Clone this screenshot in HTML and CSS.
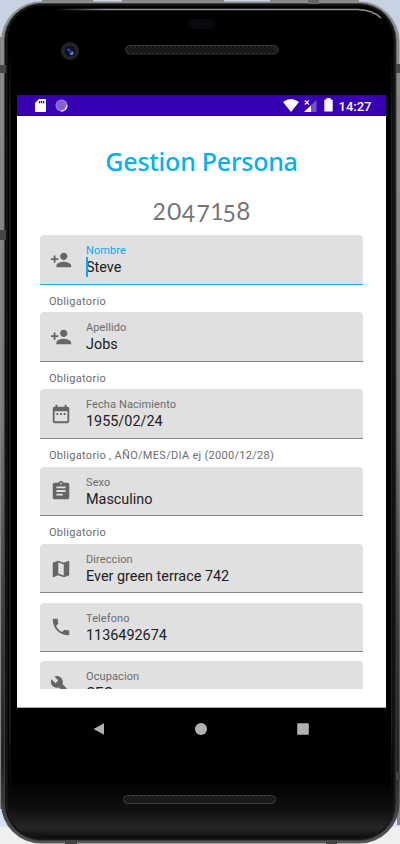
FILE: index.html
```
<!DOCTYPE html>
<html lang="es">
<head>
<meta charset="utf-8">
<title>Gestion Persona</title>
<link rel="stylesheet" href="styles.css">
</head>
<body>
<svg width="0" height="0" class="defs">
  <symbol id="person" viewBox="0 0 24 24"><path d="M15 12c2.200 0 4-1.800 4-4s-1.800-4-4-4-4 1.800-4 4 1.800 4 4 4zM6 10V7H4v3H1v2h3v3h2v-3h3v-2H6zm9 4c-2.700 0-8 1.300-8 4v2h16v-2c0-2.700-5.300-4-8-4z"/></symbol>
  <symbol id="date" viewBox="0 0 24 24"><path d="M9 11H7v2h2zm4 0h-2v2h2zm4 0h-2v2h2zM19 4h-1V2h-2v2H8V2H6v2H5c-1.100 0-2 .9-2 2v14c0 1.100.9 2 2 2h14c1.100 0 2-.9 2-2V6c0-1.100-.9-2-2-2zm0 16H5V9h14z"/></symbol>
  <symbol id="assignment" viewBox="0 0 24 24"><path d="M19 3h-4.180C14.400 1.840 13.300 1 12 1s-2.400.84-2.820 2H5c-1.100 0-2 .9-2 2v14c0 1.100.9 2 2 2h14c1.100 0 2-.9 2-2V5c0-1.100-.9-2-2-2zm-7 0c.55 0 1 .45 1 1s-.45 1-1 1-1-.45-1-1 .45-1 1-1zm2 14H7v-2h7zm3-4H7v-2h10zm0-4H7V7h10z"/></symbol>
  <symbol id="map" viewBox="0 0 24 24"><path d="M20.500 3l-.16.030L15 5.100 9 3 3.360 4.900c-.21.070-.36.250-.36.480V20.500c0 .28.220.5.500.5l.16-.03L9 18.900l6 2.100 5.640-1.900c.21-.07.360-.25.360-.48V3.500c0-.28-.22-.5-.5-.5zM15 19l-6-2.110V5l6 2.110z"/></symbol>
  <symbol id="phone" viewBox="0 0 24 24"><path d="M6.620 10.790c1.440 2.830 3.760 5.140 6.590 6.590l2.200-2.200c.27-.27.670-.36 1.020-.24 1.120.37 2.330.57 3.570.57.550 0 1 .45 1 1V20c0 .55-.45 1-1 1C10.610 21 3 13.390 3 4c0-.55.450-1 1-1h3.500c.55 0 1 .45 1 1 0 1.250.2 2.450.57 3.570.11.350.030.74-.25 1.020z"/></symbol>
  <symbol id="build" viewBox="0 0 24 24"><path d="M22.700 19l-9.100-9.100c.9-2.300.4-5-1.500-6.900-2-2-5-2.400-7.400-1.300L9 6 6 9 1.600 4.700C.4 7.100.9 10.100 2.900 12.100c1.900 1.900 4.600 2.400 6.900 1.500l9.100 9.100c.4.400 1 .4 1.400 0l2.300-2.300c.5-.4.500-1.100.1-1.400z"/></symbol>
</svg>

<svg class="shell" width="400" height="844" viewBox="0 0 400 844">
  <defs>
    <linearGradient id="rim" x2="0" y2="1"><stop offset="0" stop-color="#8f8f8d"/><stop offset=".5" stop-color="#777"/><stop offset=".7" stop-color="#444"/><stop offset=".9" stop-color="#222"/><stop offset="1" stop-color="#555"/></linearGradient>
    <linearGradient id="glass" x2="0" y2="1"><stop offset="0" stop-color="#000"/><stop offset=".93" stop-color="#000"/><stop offset=".965" stop-color="#101010"/><stop offset=".987" stop-color="#262626"/><stop offset="1" stop-color="#0a0a0a"/></linearGradient>
    <linearGradient id="shine"><stop offset="0" stop-color="#899391" stop-opacity="0"/><stop offset=".15" stop-color="#899391"/><stop offset="1" stop-color="#899391"/></linearGradient>
    <linearGradient id="side" x2="0" y2="1"><stop offset="0" stop-color="#222" stop-opacity="0"/><stop offset=".1" stop-color="#222"/><stop offset=".9" stop-color="#222"/><stop offset="1" stop-color="#222" stop-opacity="0"/></linearGradient>
    <pattern id="mesh" width="4" height="4" patternUnits="userSpaceOnUse"><path fill="#171614" d="M0 0h4v4H0z"/><path fill="#2b2823" d="M1 0h1v2H1zM3 2h1v2H3z"/></pattern>
  </defs>
  <path fill="#c7d2e3" d="M0 0h400v130H0z"/><path fill="#d6e2f2" d="M0 700h400v127H0z"/><path fill="#efefef" d="M0 827h400v17H0z"/>
  <path fill="#858585" d="M0 37h3v772H0zM397 65h3v760h-3zM42 0h51v3H42zM122 0h102v3H122zM270 0h89v3h-89z"/>
  <rect x="1" y="1.500" width="398.500" height="842" rx="40" fill="url(#rim)"/>
  <rect x="4.500" y="3.500" width="391.500" height="837" rx="37" fill="#101010" stroke="#3c3c3c"/>
  <rect x="7" y="5" width="387" height="834" rx="35" fill="url(#glass)" stroke="#1c1c1c"/>
  <rect x="9" y="45" width="1.500" height="755" fill="url(#side)"/><rect x="391" y="45" width="1.500" height="755" fill="url(#side)"/>
  <path d="M55 9.500H358Q373 10 381 18" fill="none" stroke="url(#shine)" stroke-width="1.500"/>
  <path d="M0 65h6v8H0zM0 230h6v10H0zM396 64h4v9h-4zM396 772h4v8h-4zM65 840h12v4H65zM326 840h11v4h-11z" fill="#454545"/>
  <path d="M308 0h11v4h-11z" fill="#666"/>
  <rect x="188" y="19" width="27" height="10" rx="5" fill="#08090c"/>
  <circle cx="70" cy="51" r="9" fill="#252422"/><circle cx="70" cy="51" r="5.300" fill="#0c1025"/>
  <circle cx="71.500" cy="53" r="2" fill="#7182d6"/><path d="M67 49l3 0 2 3-2 2z" fill="#233585"/><circle cx="68.500" cy="49.500" r="1" fill="#465bc0"/>
  <rect x="125.500" y="45.500" width="153" height="8.500" rx="4.250" fill="url(#mesh)" stroke="#383735"/>
  <rect x="123.500" y="795.500" width="152" height="8" rx="4" fill="url(#mesh)" stroke="#3c3c38"/>
</svg>

<div class="phone">
  <main class="screen">
    <header class="status">
      <svg width="12" height="14" viewBox="0 0 12 14" class="sd"><path fill="#fff" d="M4 0h6q1 0 1 1v11q0 1-1 1H1q-1 0-1-1V4z"/><path fill="#3700b3" d="M4 2h1.300v2.200H4zM6 2h1.300v2.200H6zM8 2h1.300v2.200H8z"/></svg>
      <svg width="14" height="14" viewBox="0 0 14 14" class="sync"><circle cx="6.500" cy="6.500" r="6" fill="#9a7fd9"/><circle cx="6.200" cy="6.200" r="4.700" fill="#8260d0"/><path d="M12 6a6 6 0 0 1-6 6.200" fill="none" stroke="#eee7fb" stroke-width="1.200"/></svg>
      <svg width="16" height="13" viewBox="0 0 16 13" class="wifi"><path fill="#fff" d="M0 3Q8-3 16 3L8 13z"/></svg>
      <svg width="13" height="13" viewBox="0 0 13 13" class="cell"><path fill="#7650cb" d="M12.500 1v12H0z"/><path fill="#fff" d="M7 6.500V13H0z"/><path d="M.8 1.500l4 4m0-4l-4 4" stroke="#fff" stroke-width="1.100"/></svg>
      <svg width="9" height="14" viewBox="0 0 9 14" class="battery"><path fill="#fff" d="M2.500 0h4v1.500H8q.7 0 .7.700v10.600q0 .7-.7.700H1q-.7 0-.7-.7V2.200q0-.7.700-.7h1.500z"/></svg>
      <span class="clock">14:27</span>
    </header>
    <h1>Gestion Persona</h1>
    <div class="code"><span>2</span><span class="zero">0</span><span class="low">4</span><span class="low">7</span><span class="one">1</span><span class="low">5</span><span class="tall">8</span></div>
    <form class="fields">
      <div class="field active"><svg><use href="#person"/></svg><div class="text"><label>Nombre</label><span class="value"><i class="caret"></i>Steve</span></div></div>
      <p>Obligatorio</p>
      <div class="field"><svg><use href="#person"/></svg><div class="text"><label>Apellido</label><span class="value">Jobs</span></div></div>
      <p>Obligatorio</p>
      <div class="field"><svg><use href="#date"/></svg><div class="text"><label>Fecha Nacimiento</label><span class="value">1955/02/24</span></div></div>
      <p>Obligatorio , AÑO/MES/DIA ej (2000/12/28)</p>
      <div class="field"><svg><use href="#assignment"/></svg><div class="text"><label>Sexo</label><span class="value">Masculino</span></div></div>
      <p>Obligatorio</p>
      <div class="field plain"><svg><use href="#map"/></svg><div class="text"><label>Direccion</label><span class="value">Ever green terrace 742</span></div></div>
      <div class="field plain"><svg><use href="#phone"/></svg><div class="text"><label>Telefono</label><span class="value">1136492674</span></div></div>
      <div class="field"><svg><use href="#build"/></svg><div class="text"><label>Ocupacion</label><span class="value">CEO</span></div></div>
    </form>
  </main>
  <nav>
    <svg width="12" height="12" viewBox="0 0 12 12"><path d="M.5 6L11 .3v11.400z"/></svg>
    <svg width="12" height="12" viewBox="0 0 12 12"><circle cx="6" cy="6" r="6"/></svg>
    <svg width="12" height="12" viewBox="0 0 12 12"><rect x=".2" y=".2" width="11.600" height="11.600" rx=".7"/></svg>
  </nav>
</div>
</body>
</html>
```
FILE: styles.css
```
* { box-sizing: border-box; }
body { margin: 0; width: 400px; height: 844px; overflow: hidden; font-family: Roboto, sans-serif; background: #c7d2e3; }
.defs { position: absolute; }
.shell { position: absolute; top: 0; left: 0; }
.phone { position: relative; height: 844px; padding: 95px 14px 0 17px; }
.screen { height: 613px; background: #fff; border-bottom: 1px solid #aaa; }
.status { display: flex; align-items: flex-start; height: 21px; padding: 4px 14.5px 0 18px; background: #3700b3; border-bottom: 1px solid #2c0090; }
.status svg { flex: none; }
.sync { margin-left: 8px; }
.wifi { margin-left: auto; }
.cell { margin-left: 5px; }
.battery { margin: -1px 0 0 7px; }
.clock { margin-left: 6px; font-size: 13px; line-height: 15px; font-weight: 500; color: #fff; }
h1 { margin: 26px 0 0; height: 40px; text-align: center; font: 500 25px/38px "Noto Sans", sans-serif; letter-spacing: -.25px; color: #03b0f4; }
.code { display: flex; justify-content: center; height: 53px; padding-top: 15px; font: 23px/28px Lato, sans-serif; color: #757575; }
.code span { width: 14.600px; text-align: center; }
.code .zero { transform: scaleX(1.080); }
.code .low { transform: translateY(1.500px); }
.code .one { width: 11.500px; }
.code .tall { transform: scale(1.060); transform-origin: 50% 79%; }
.fields { height: 454px; margin: 0 23px 0 22.500px; overflow: hidden; }
.field { display: flex; height: 49.600px; padding: 0 12px 0 10.500px; border-radius: 4px 4px 0 0; background: #e0e0e0; border-bottom: 1px solid #858585; }
.field > svg { flex: none; width: 22px; height: 22px; margin-top: 13.800px; fill: #666; }
.text { margin-left: 14px; padding-top: 8px; }
label { display: block; height: 15px; font-size: 11px; line-height: 15px; letter-spacing: .1px; color: #6c6c6c; }
.value { position: relative; display: block; font-size: 14.400px; line-height: 19.500px; color: #212121; }
.active { border-bottom: 1.500px solid #1ba9e5; }
.active label { color: #03a9f4; }
.caret { position: absolute; left: 0; top: -1.500px; width: 1.500px; height: 20px; background: #03a9f4; }
.fields p { margin: 0; height: 27.600px; padding: 9px 0 0 9.500px; font-size: 11px; line-height: 15px; letter-spacing: .3px; color: #6c6c6c; }
.plain { margin-bottom: 9.200px; }
nav { display: flex; justify-content: space-between; padding: 15px 77px 0 76px; }
nav svg { fill: #b1b1b1; }
```
